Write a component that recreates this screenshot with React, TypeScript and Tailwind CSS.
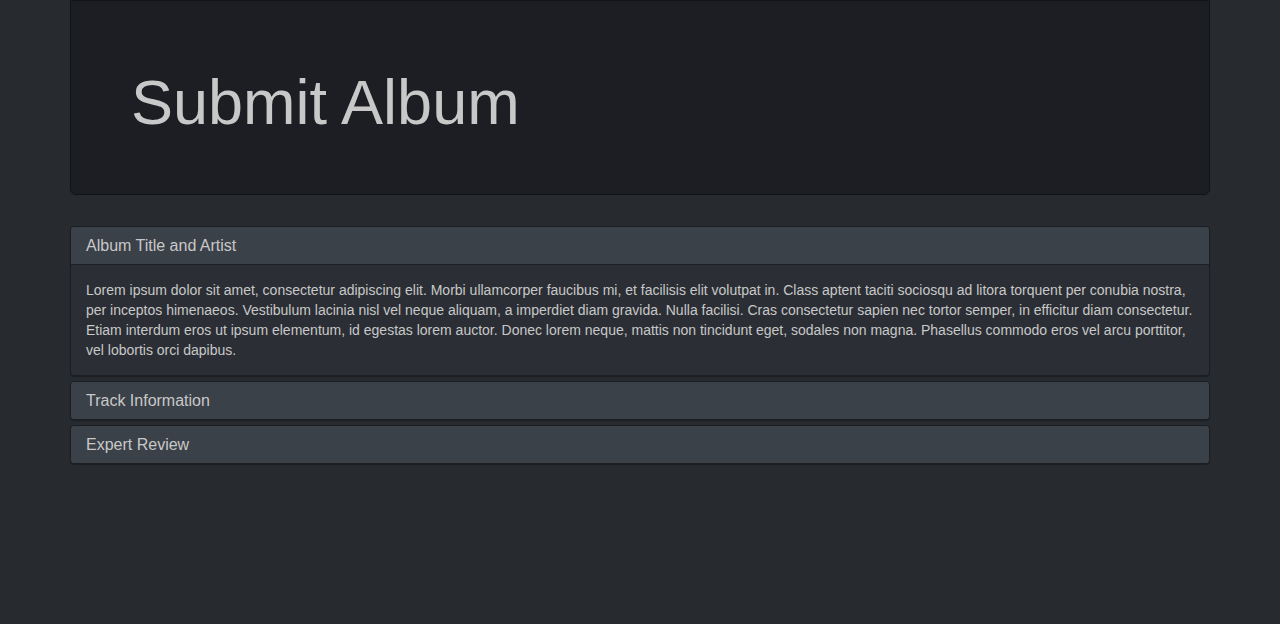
const lorem =
  'Lorem ipsum dolor sit amet, consectetur adipiscing elit. Morbi ullamcorper faucibus mi, et facilisis elit volutpat in. Class aptent taciti sociosqu ad litora torquent per conubia nostra, per inceptos himenaeos. Vestibulum lacinia nisl vel neque aliquam, a imperdiet diam gravida. Nulla facilisi. Cras consectetur sapien nec tortor semper, in efficitur diam consectetur. Etiam interdum eros ut ipsum elementum, id egestas lorem auctor. Donec lorem neque, mattis non tincidunt eget, sodales non magna. Phasellus commodo eros vel arcu porttitor, vel lobortis orci dapibus.';

const sections = [
  { title: 'Album Title and Artist', open: true },
  { title: 'Track Information', open: false },
  { title: 'Expert Review', open: false },
];

const App = () => {
  return (
    <div className="min-h-[624px] bg-[#272b30] font-['Liberation_Sans',Arial,sans-serif] text-[#c8c8c8]">
      <div className="w-[1140px] mx-auto">
        {/* Jumbotron */}
        <div className="h-[195px] bg-[#1c1e23] border border-[#121316] rounded-b-md pl-[60px] pt-[67px]">
          <h1 className="text-[63px] leading-[1.1] text-[#c8c8c8]">Submit Album</h1>
        </div>

        {/* Accordion */}
        <div className="mt-[31px] flex flex-col gap-[5px]">
          {sections.map(s => (
            <div
              key={s.title}
              className="rounded border border-[#1c1e22] bg-[#2b2f35] overflow-hidden shadow-[0_1px_1px_rgba(0,0,0,0.3)]"
            >
              <div className="h-[37px] bg-[#3b4149] px-[15px] flex items-center text-[16px]">
                {s.title}
              </div>
              {s.open && (
                <div className="border-t border-[#1c1e22] p-[15px] text-[14px] leading-[20px]">
                  {lorem}
                </div>
              )}
            </div>
          ))}
        </div>
      </div>
    </div>
  );
};

export default App;
